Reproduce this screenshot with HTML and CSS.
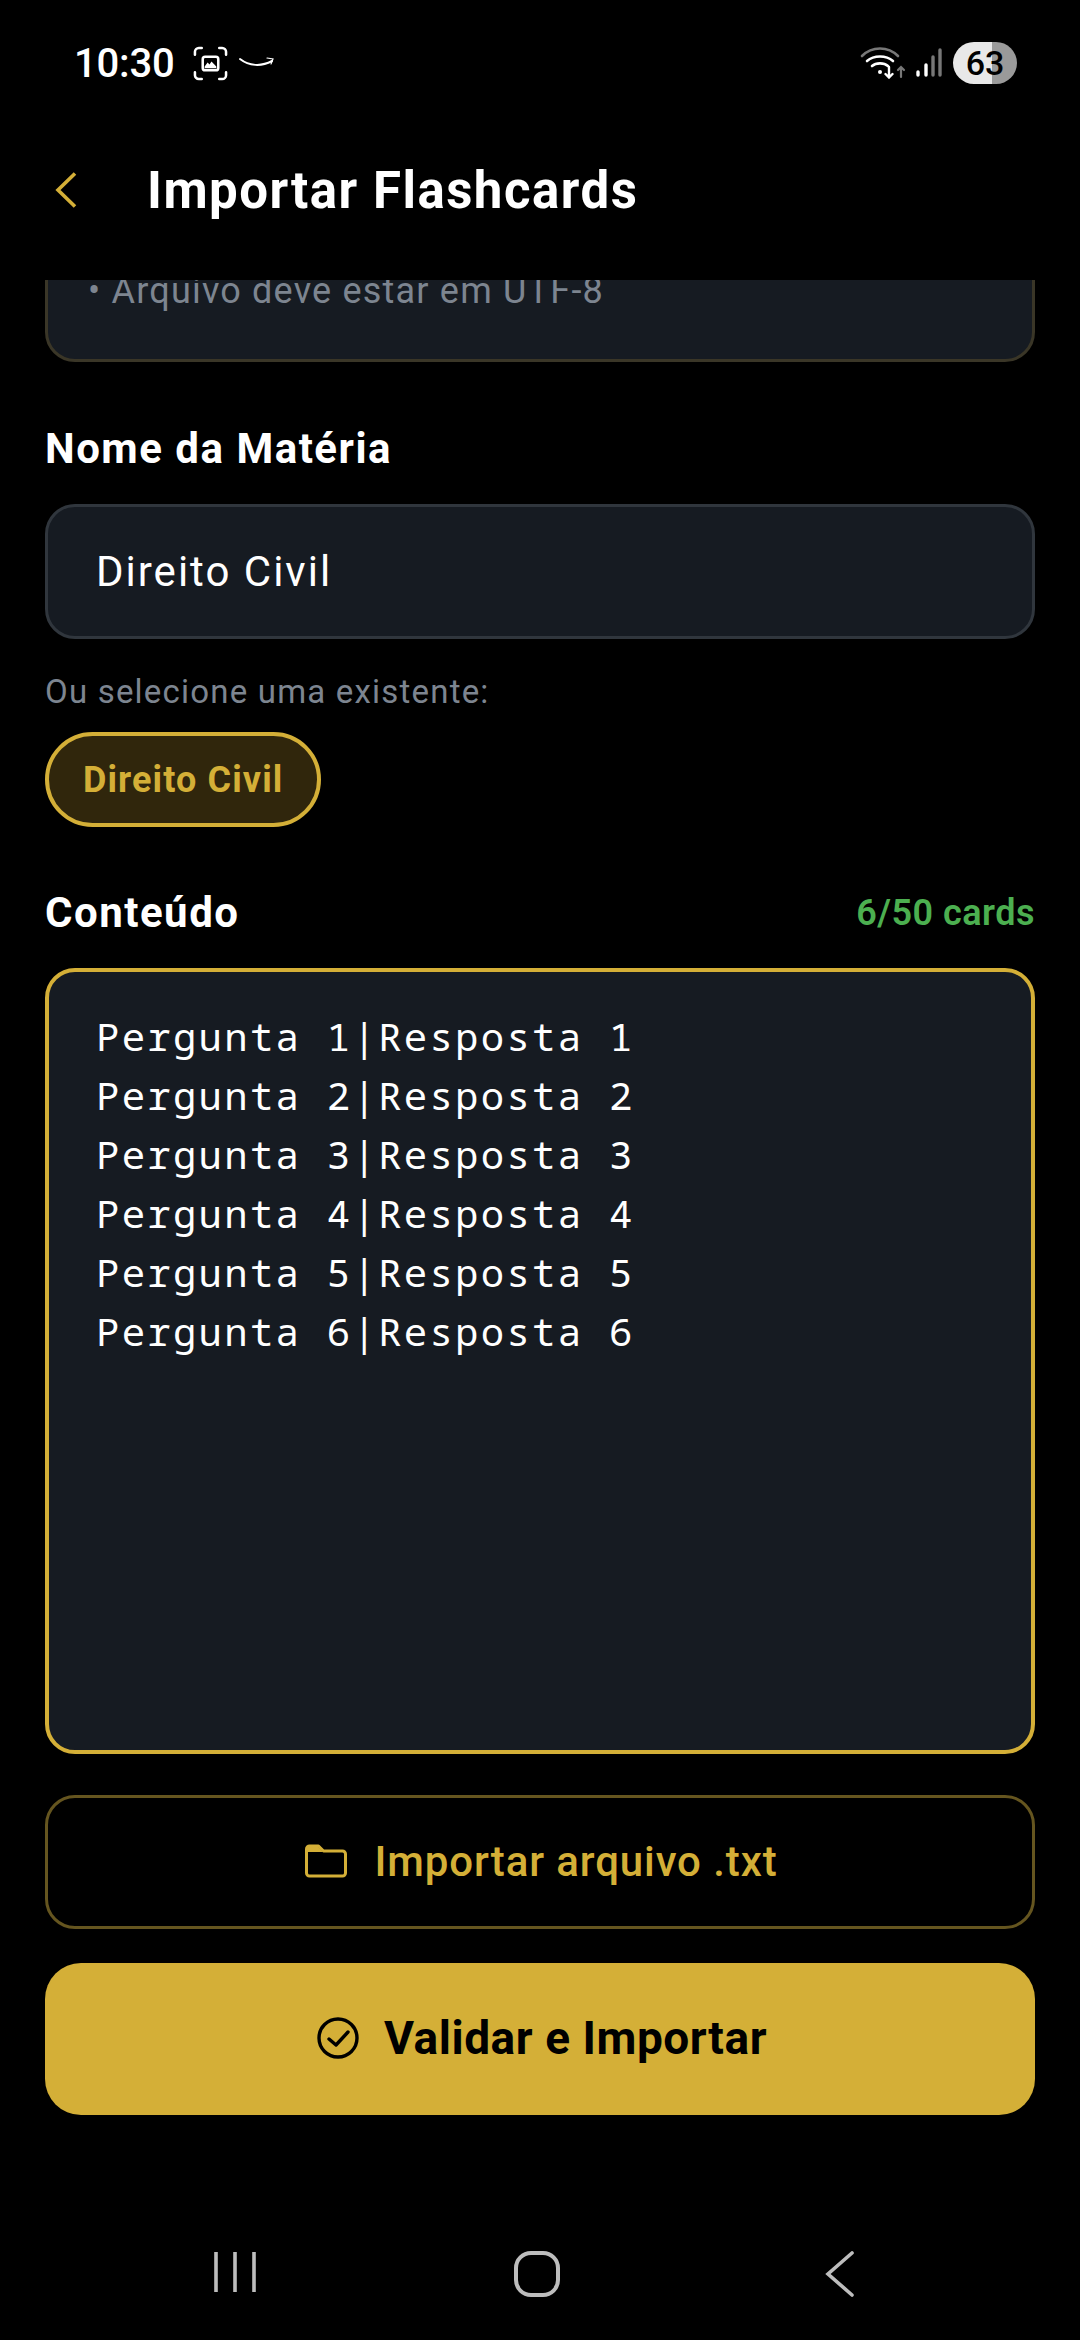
FILE: index.html
```html
<!DOCTYPE html>
<html lang="pt">
<head>
<meta charset="utf-8">
<title>Importar Flashcards</title>
<link rel="stylesheet" href="styles.css">
</head>
<body>
<div class="screen">
  <div class="status">
    <div class="status-left">
      <span class="time">10:30</span>
      <svg class="ic-shot" viewBox="0 0 36 36" fill="none" stroke="#fff" stroke-width="2.6" stroke-linecap="round">
        <path d="M9 2H6a4 4 0 0 0-4 4v3M27 2h3a4 4 0 0 1 4 4v3M9 34H6a4 4 0 0 1-4-4v-3M27 34h3a4 4 0 0 0 4-4v-3"/>
        <rect x="10" y="11" width="16" height="14" rx="2.5"/>
        <path d="M12 21l3-4 2 2 2-3 5 5v2H12z" fill="#fff" stroke="none"/>
      </svg>
      <svg class="ic-amz" viewBox="0 0 36 14" fill="none" stroke="#fff" stroke-linecap="round">
        <path d="M1 3c9 7 21 8 32 2" stroke-width="2"/>
        <path d="M28 2l6 1-2 5" stroke-width="1.2"/>
      </svg>
    </div>
    <div class="status-right">
      <svg class="ic-wifi" viewBox="0 0 46 32" fill="none" stroke-linecap="round">
        <path d="M2 9C12-1 28-1 38 9" stroke="#777" stroke-width="2.6"/>
        <path d="M7 14c7-6 19-6 26 0" stroke="#fff" stroke-width="2.6"/>
        <path d="M12 19c4-3.500 12-3.500 16 0" stroke="#fff" stroke-width="2.600"/>
        <circle cx="20" cy="25" r="2" fill="#fff"/>
        <path d="M29 20v10M25.500 27l3.500 3.500 3.500-3.500" stroke="#fff" stroke-width="2.400"/>
        <path d="M41 30V20M38 23l3-3 3 3" stroke="#777" stroke-width="2.200"/>
      </svg>
      <svg class="ic-signal" viewBox="0 0 28 30" fill="none" stroke-width="3.400" stroke-linecap="round">
        <path d="M3 27v-3" stroke="#fff"/>
        <path d="M11 27V17" stroke="#fff"/>
        <path d="M18 27V9" stroke="#777"/>
        <path d="M25 27V2" stroke="#777"/>
      </svg>
      <span class="battery">63</span>
    </div>
  </div>

  <header class="appbar">
    <svg class="ic-back" viewBox="0 0 22 36" fill="none" stroke="#d4af37" stroke-width="3.600">
      <path d="M20 1.500L3 18l17 16.500"/>
    </svg>
    <h1 class="title">Importar Flashcards</h1>
  </header>

  <main class="content">
    <div class="hint-card">
      <p class="hint">• Arquivo deve estar em UTF-8</p>
    </div>

    <label class="label label-name">Nome da Matéria</label>
    <div class="input">Direito Civil</div>
    <p class="sub">Ou selecione uma existente:</p>
    <div class="chips"><span class="chip">Direito Civil</span></div>

    <div class="row-label">
      <span class="label">Conteúdo</span>
      <span class="count">6/50 cards</span>
    </div>
    <div class="textarea">
      <div>Pergunta 1|Resposta 1</div>
      <div>Pergunta 2|Resposta 2</div>
      <div>Pergunta 3|Resposta 3</div>
      <div>Pergunta 4|Resposta 4</div>
      <div>Pergunta 5|Resposta 5</div>
      <div>Pergunta 6|Resposta 6</div>
    </div>

    <button class="btn-outline">
      <svg class="ic-folder" viewBox="0 0 42 34" fill="none" stroke="#d4af37" stroke-width="3">
        <path d="M1.500 29V5a3 3 0 0 1 3-3h9l5 5h19a3 3 0 0 1 3 3v19a3 3 0 0 1-3 3H4.500a3 3 0 0 1-3-3z" stroke-linejoin="round"/>
        <path d="M3 3h10l5 5H3z" fill="#d4af37" stroke="none"/>
      </svg>
      <span>Importar arquivo .txt</span>
    </button>
    <button class="btn-primary">
      <svg class="ic-check" viewBox="0 0 42 42" fill="none" stroke="#000" stroke-width="3.400">
        <circle cx="21" cy="21" r="19"/>
        <path d="M12 22l7 6 12-13" stroke-linecap="round" stroke-linejoin="round"/>
      </svg>
      <span>Validar e Importar</span>
    </button>
  </main>

  <nav class="navbar">
    <svg class="ic-recents" viewBox="0 0 42 42" fill="none" stroke="#bdbdbd" stroke-width="3.600">
      <path d="M2 1v40M21 1v40M40 1v40"/>
    </svg>
    <svg class="ic-home" viewBox="0 0 46 46" fill="none" stroke="#bdbdbd" stroke-width="4">
      <rect x="2" y="2" width="42" height="42" rx="15"/>
    </svg>
    <svg class="ic-navback" viewBox="0 0 30 46" fill="none" stroke="#bdbdbd" stroke-width="3.600" stroke-linecap="round">
      <path d="M27 2L3 23l24 21"/>
    </svg>
  </nav>
</div>
</body>
</html>
```
FILE: styles.css
```css
* { box-sizing: border-box; }
html, body { margin: 0; padding: 0; background: #000; }
.screen {
  width: 1080px; height: 2340px; background: #000; color: #fff;
  font-family: Roboto, sans-serif; display: flex; flex-direction: column; overflow: hidden;
}
.status {
  height: 100px; padding: 26px 0 0 74px; display: flex; justify-content: space-between; align-items: center; flex: none;
}
.status-left { display: flex; align-items: center; }
.time { font-size: 40px; font-weight: 500; color: #fff; letter-spacing: -0.2px; }
.ic-shot { width: 35px; height: 35px; margin-left: 18px; }
.ic-amz { width: 36px; height: 14px; margin-left: 11px; }
.status-right { display: flex; align-items: center; padding-right: 63px; }
.ic-wifi { width: 46px; height: 32px; }
.ic-signal { width: 28px; height: 30px; margin-left: 9px; }
.battery {
  width: 64px; height: 42px; border-radius: 21px; margin-left: 10px;
  background: linear-gradient(90deg, #e8e8e8 0 61%, #9a9a9a 61% 100%);
  color: #000; font-size: 34px; font-weight: 500; display: flex; align-items: center; justify-content: center;
}
.appbar {
  height: 180px; flex: none; display: flex; align-items: center; padding: 0 0 0 55px;
}
.ic-back { width: 22px; height: 36px; flex: none; }
.title { margin: 0 0 0 70px; font-size: 51px; font-weight: 700; letter-spacing: 1.500px; color: #fff; white-space: nowrap; }
.content { flex: 1; overflow: hidden; padding: 0 45px; display: flex; flex-direction: column; }
.hint-card {
  flex: none; height: 200px; margin-top: -118px; background: #161b22; border: 3px solid #3a3627; border-radius: 30px;
  padding: 0 40px; display: flex; flex-direction: column; justify-content: flex-end;
}
.hint { margin: 0 0 43px; font-size: 36px; color: #7d8590; letter-spacing: 1.200px; line-height: 50px; white-space: nowrap; }
.label { font-size: 42px; font-weight: 700; letter-spacing: 1.500px; color: #fff; display: block; line-height: 50px; }
.label-name { margin-top: 62px; }
.input {
  margin-top: 30px; height: 135px; flex: none; background: #161b22; border: 3px solid #30363d; border-radius: 30px;
  padding: 0 48px; display: flex; align-items: center; font-size: 42px; color: #fff; letter-spacing: 2px;
}
.sub { margin: 31px 0 0; font-size: 33px; line-height: 44px; color: #7d8590; letter-spacing: 1.200px; }
.chips { margin-top: 18px; display: flex; }
.chip {
  height: 95px; padding: 0 34px; display: flex; align-items: center; border: 4px solid #d4af37; border-radius: 48px;
  background: #30260c; color: #d4af37; font-size: 36px; font-weight: 700; letter-spacing: 1.100px;
}
.row-label { margin-top: 61px; display: flex; justify-content: space-between; align-items: center; height: 50px; flex: none; }
.count { font-size: 36px; font-weight: 600; letter-spacing: 0.500px; color: #4caf50; }
.textarea {
  margin-top: 30px; height: 786px; flex: none; background: #161b22; border: 4px solid #d4af37; border-radius: 30px;
  padding: 34px 47px; font-family: "Noto Sans Mono", "DejaVu Sans Mono", monospace; font-size: 39px; line-height: 59px; color: #fff; letter-spacing: 2.250px; white-space: nowrap;
}
.btn-outline {
  margin-top: 41px; height: 134px; flex: none; background: #000; border: 3px solid #65551f; border-radius: 30px; padding: 0 0 2px 3px;
  display: flex; align-items: center; justify-content: center; gap: 27px; color: #d4af37; font-family: inherit; font-size: 42px; font-weight: 500; letter-spacing: 0.900px;
}
.ic-folder { width: 42px; height: 34px; }
.btn-primary {
  margin-top: 34px; height: 152px; flex: none; background: #d4af37; border: 0; border-radius: 36px; padding: 0 0 2px 4px;
  display: flex; align-items: center; justify-content: center; gap: 25px; color: #000; font-family: inherit; font-size: 46px; font-weight: 700; letter-spacing: 0.550px;
}
.ic-check { width: 42px; height: 42px; }
.navbar { flex: none; height: 136px; display: flex; align-items: flex-start; padding: 47px 0 0 214px; }
.ic-recents { width: 42px; height: 42px; flex: none; }
.ic-home { width: 46px; height: 46px; flex: none; margin-left: 258px; }
.ic-navback { width: 30px; height: 46px; flex: none; margin-left: 265px; }
```
